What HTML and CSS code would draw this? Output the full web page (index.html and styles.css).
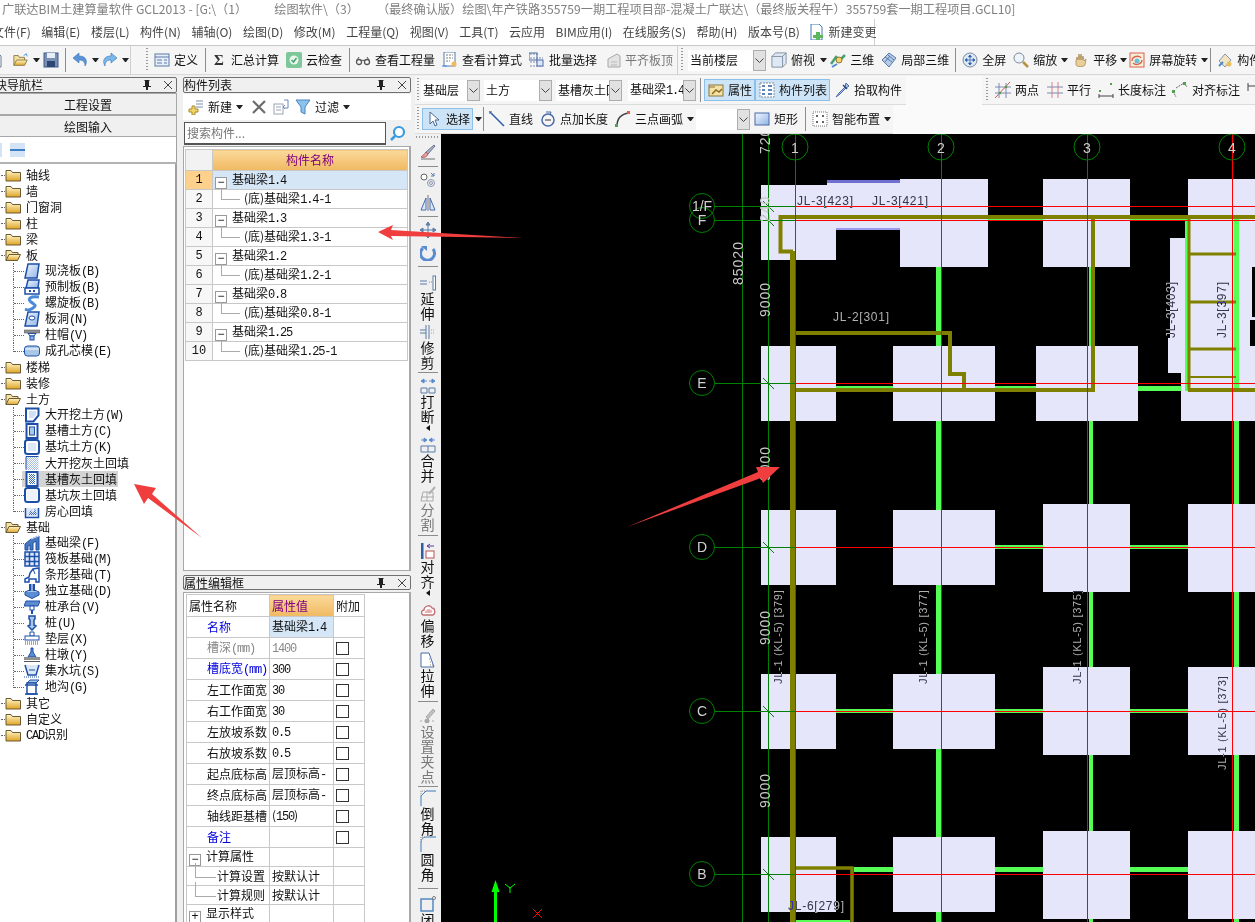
FILE: index.html
```html
<!DOCTYPE html>
<html lang="zh">
<head>
<meta charset="utf-8">
<title>广联达BIM土建算量软件 GCL2013</title>
<link rel="stylesheet" href="styles.css">
</head>
<body>
<svg class="defs" width="0" height="0">
<defs>
<linearGradient id="fg" x1="0" y1="0" x2="0" y2="1"><stop offset="0" stop-color="#fff6c4"/><stop offset="1" stop-color="#e0a42a"/></linearGradient>
<linearGradient id="bg" x1="0" y1="0" x2="1" y2="1"><stop offset="0" stop-color="#f2f7ff"/><stop offset="1" stop-color="#8fb4e6"/></linearGradient>
<pattern id="ht" width="2" height="2" patternUnits="userSpaceOnUse"><rect width="1" height="1" fill="#3b6cb8"/><rect x="1" y="1" width="1" height="1" fill="#3b6cb8"/></pattern>
<symbol id="fc" viewBox="0 0 16 16"><path d="M1 3.500h5l1.500 2H15.500v8.500H1z" fill="url(#fg)" stroke="#6b5a34"/></symbol>
<symbol id="fo" viewBox="0 0 16 16"><path d="M1 13.500V3.500h5l1.500 2h5.500v2.500" fill="#f4e2a4" stroke="#6b5a34"/><path d="M1 13.500l3-6h11.500l-3 6z" fill="url(#fg)" stroke="#6b5a34"/></symbol>
<symbol id="slab" viewBox="0 0 16 16"><path d="M4 1h11l-2 14H1z" fill="url(#bg)" stroke="#1c4fa8" stroke-width="1.500"/></symbol>
<symbol id="pre" viewBox="0 0 16 16"><path d="M4 1h11l-1 8H2z" fill="url(#bg)" stroke="#1c4fa8" stroke-width="1.500"/><rect x="1" y="9" width="14" height="6" fill="#fff" stroke="#1c4fa8" stroke-width="1.500"/><path d="M5 11h2v2H5zM9 11h2v2H9z" fill="#1c4fa8"/></symbol>
<symbol id="spi" viewBox="0 0 16 16"><path d="M15 2C6 1 3 4 7 7s6 3 2 6-6 2-8 1" fill="none" stroke="#4a8ad8" stroke-width="3"/></symbol>
<symbol id="hole" viewBox="0 0 16 16"><path d="M4 1h11l-2 14H1z" fill="url(#bg)" stroke="#1c4fa8" stroke-width="1.500"/><ellipse cx="8" cy="7" rx="3" ry="2" fill="#fff" stroke="#1c4fa8"/></symbol>
<symbol id="cap" viewBox="0 0 16 16"><rect x="0" y="3" width="16" height="3" fill="#909090" stroke="#555" stroke-width=".5"/><path d="M4 6.500h8L10 9H6z" fill="#fff" stroke="#1c4fa8"/><rect x="6" y="9" width="4" height="4" fill="#8fb4e6" stroke="#1c4fa8"/></symbol>
<symbol id="core" viewBox="0 0 16 16"><rect x=".5" y="3" width="15" height="10" rx="3" fill="#a9c8e8" stroke="#1c4fa8"/><path d="M1 6h14" stroke="#fff"/></symbol>
<symbol id="dig" viewBox="0 0 16 16"><path d="M2 1.500h12.500v7l-5 6H2z" fill="#fff" stroke="#1c4fa8" stroke-width="2"/><path d="M5 4h7v4l-3 3H5z" fill="#cfe0f8"/></symbol>
<symbol id="gro" viewBox="0 0 16 16"><rect x="2.500" y="1" width="11" height="14" fill="#fff" stroke="#1c4fa8" stroke-width="2"/><rect x="5.500" y="4" width="5" height="8" fill="#a9c8e8" stroke="#1c4fa8"/></symbol>
<symbol id="pit" viewBox="0 0 16 16"><rect x="1" y="1" width="14" height="14" rx="2.500" fill="#fff" stroke="#1c4fa8" stroke-width="2"/><rect x="4" y="4" width="8" height="8" fill="#dce8f8"/></symbol>
<symbol id="dig2" viewBox="0 0 16 16"><path d="M2 1h12.500v14H2z" fill="url(#ht)" opacity=".45"/><path d="M2 1.500v13M2 1.500h12.500" stroke="#1c4fa8"/></symbol>
<symbol id="gro2" viewBox="0 0 16 16"><rect x="2.500" y="1" width="11" height="14" fill="#fff" stroke="#1c4fa8" stroke-width="2"/><rect x="5" y="3" width="6" height="10" fill="url(#ht)"/></symbol>
<symbol id="pit2" viewBox="0 0 16 16"><rect x="1" y="1" width="14" height="14" rx="2.500" fill="#fff" stroke="#1c4fa8" stroke-width="2"/><rect x="3" y="3" width="10" height="10" fill="#eef3fb"/></symbol>
<symbol id="room" viewBox="0 0 16 16"><path d="M1.500 5v9.500h13V5" fill="#dce8f8" stroke="#1c4fa8" stroke-width="1.500"/><path d="M4 12l3-5 2 3 2-5 2 7z" fill="url(#ht)"/></symbol>
<symbol id="beam" viewBox="0 0 16 16"><path d="M1 15V9l6-5 8-3v14h-3V6L9 8v7H6v-5l-2 1v4z" fill="#4678c0" stroke="#1c4fa8"/><path d="M7 4l8-3" stroke="#cfe0f8"/></symbol>
<symbol id="raft" viewBox="0 0 16 16"><rect x="1" y="1" width="14" height="14" fill="#dce8f8" stroke="#1c4fa8" stroke-width="1.500"/><path d="M5.500 1v14M10.500 1v14M1 5.500h14M1 10.500h14" stroke="#1c4fa8" stroke-width="1.500"/></symbol>
<symbol id="strip" viewBox="0 0 16 16"><path d="M1 15V12l4-2 1-4 3-4 6-1v14H12v-3H5v3z" fill="#fff" stroke="#1c4fa8" stroke-width="1.500"/><path d="M9 2l2 5" stroke="#1c4fa8"/></symbol>
<symbol id="iso" viewBox="0 0 16 16"><path d="M1 9l7-3 7 3-7 4z" fill="#a9c8e8" stroke="#1c4fa8"/><path d="M1 9v3l7 3.500 7-3.500V9" fill="#5d8cd0" stroke="#1c4fa8"/><rect x="5" y="1" width="6" height="7" fill="#1c4fa8"/><path d="M8 1v7" stroke="#fff"/></symbol>
<symbol id="pc" viewBox="0 0 16 16"><path d="M2 2h14l-2 5H0z" fill="#5d8cd0" stroke="#1c4fa8"/><rect x="6" y="7" width="4" height="4" fill="#fff" stroke="#1c4fa8"/><path d="M8 11v4" stroke="#1c4fa8" stroke-width="2"/></symbol>
<symbol id="pile" viewBox="0 0 16 16"><path d="M5 1h6v3l-1 1v5l2 1-4 4-4-4 2-1V5L5 4z" fill="#a9c8e8" stroke="#1c4fa8" stroke-width="1.500"/></symbol>
<symbol id="cush" viewBox="0 0 16 16"><path d="M6 1h4v4H6z" fill="#fff" stroke="#1c4fa8"/><rect x="1" y="5" width="14" height="4" fill="#fff" stroke="#1c4fa8"/><path d="M1 11h14M1 13h14" stroke="#1c4fa8" stroke-dasharray="1 1"/></symbol>
<symbol id="pier" viewBox="0 0 16 16"><path d="M7 1h2v4l3 5H4l3-5z" fill="#5d8cd0" stroke="#1c4fa8"/><rect x="0" y="10" width="16" height="3" fill="#909090"/><path d="M0 14.500h16" stroke="#555"/></symbol>
<symbol id="sump" viewBox="0 0 16 16"><path d="M1 2l3 10h8l3-10" fill="#dce8f8" stroke="#1c4fa8" stroke-width="1.500"/><path d="M0 14h16" stroke="#1c4fa8" stroke-dasharray="1 1"/><path d="M5 7h6" stroke="#1c4fa8"/></symbol>
<symbol id="tren" viewBox="0 0 16 16"><path d="M3 4l3-3h9l-3 3z" fill="#a9c8e8" stroke="#1c4fa8"/><path d="M3 4h9v11H3z" fill="#fff" stroke="#1c4fa8" stroke-width="1.500"/><path d="M1 15h13M1 6h13" stroke="#1c4fa8" stroke-width="1.500"/></symbol>

<symbol id="file" viewBox="0 0 16 16"><path d="M2 1h9l3 3v11H2z" fill="#fff" stroke="#6a7a90"/></symbol>
<symbol id="open" viewBox="0 0 18 16"><path d="M1 14V3h5l1 2h6v3" fill="#f4e2a4" stroke="#8a7440"/><path d="M1 14l3-6h12l-3 6z" fill="url(#fg)" stroke="#8a7440"/><path d="M12 3l3-2 1 3" fill="none" stroke="#4a8ad8"/></symbol>
<symbol id="save" viewBox="0 0 16 16"><rect x="1" y="1" width="14" height="14" fill="#7a8fb4" stroke="#3e5a8c"/><rect x="4" y="1" width="8" height="5" fill="#e8eef8"/><rect x="4" y="9" width="8" height="6" fill="#2e4674"/></symbol>
<symbol id="undo" viewBox="0 0 16 16"><path d="M13 14c3-5 1-10-6-10V1L1 6l6 5V8c4 0 6 2 6 6z" fill="#5a94d8" stroke="#3a70b8" stroke-width=".6"/></symbol>
<symbol id="redo" viewBox="0 0 16 16"><path d="M3 14C0 9 2 4 9 4V1l6 5-6 5V8c-4 0-6 2-6 6z" fill="#7ab8e8" stroke="#3a70b8" stroke-width=".6"/></symbol>
<symbol id="def" viewBox="0 0 16 16"><rect x="1" y="2" width="14" height="12" fill="#e8eff8" stroke="#5a7aa8"/><path d="M1 5h14M3 8h5M3 11h5M10 8h3M10 11h3" stroke="#5a7aa8"/></symbol>
<symbol id="cloud" viewBox="0 0 16 16"><rect x="0" y="0" width="16" height="16" rx="2" fill="#7cc89a"/><circle cx="8" cy="8" r="4.500" fill="#e8f6ec"/><path d="M5.500 8l2 2 3-4" fill="none" stroke="#4aa070" stroke-width="1.500"/></symbol>
<symbol id="glass" viewBox="0 0 16 16"><circle cx="4" cy="10" r="2.500" fill="#fff" stroke="#555" stroke-width="1.300"/><circle cx="12" cy="10" r="2.500" fill="#fff" stroke="#555" stroke-width="1.300"/><path d="M6 9c1-1 3-1 4 0M2 8l2-3M14 8l-2-3" fill="none" stroke="#555"/></symbol>
<symbol id="calc" viewBox="0 0 16 16"><rect x="2" y="0" width="11" height="14" fill="#fff" stroke="#5a7aa8"/><path d="M4 3h7M4 6h7M4 9h4" stroke="#7c7c7c" stroke-dasharray="2 1"/><circle cx="12" cy="12" r="2.500" fill="#f0b860"/><path d="M0 14h5" stroke="#4a8ad8"/></symbol>
<symbol id="batch" viewBox="0 0 16 16"><path d="M1 2h9M1 6h13M1 10h9M1 14h13" stroke="#7c8aa8" stroke-dasharray="2 1"/><rect x="0" y="1" width="8" height="7" fill="none" stroke="#4a6aa8"/><rect x="8" y="8" width="6" height="6" fill="#dde8f8" stroke="#4a6aa8"/></symbol>
<symbol id="flat" viewBox="0 0 16 16"><path d="M3 15V7l9-5 3 2v11z" fill="#e4e4e4" stroke="#a8a8a8"/><path d="M6 10h6M6 13h6" stroke="#b8b8b8"/></symbol>
<symbol id="cube" viewBox="0 0 18 18"><path d="M1 5l4-4h12v12l-4 4H1z" fill="#dfe9f5" stroke="#7c8a9c"/><path d="M1 5h12v12M13 5l4-4" fill="none" stroke="#7c8a9c"/></symbol>
<symbol id="t3d" viewBox="0 0 16 16"><path d="M1 12l5-7 4 3 5-5" fill="none" stroke="#4aa070" stroke-width="2.500"/><circle cx="9" cy="8" r="3" fill="#f4d264" stroke="#8a7440"/><path d="M2 15l5-3" stroke="#4a8ad8" stroke-width="2"/></symbol>
<symbol id="part" viewBox="0 0 16 16"><path d="M1 8l7-7 7 5-7 9z" fill="#b6cbe6" stroke="#5a7aa8"/><path d="M4 5l7 5M7 3l6 5M4 10l5-6" stroke="#5a7aa8"/></symbol>
<symbol id="fit" viewBox="0 0 16 16"><circle cx="8" cy="8" r="7" fill="#dce8f4" stroke="#7c8a9c"/><path d="M8 3v10M3 8h10M8 3L6.500 5h3zM8 13l-1.500-2h3zM3 8l2-1.500v3zM13 8l-2-1.500v3z" fill="#2e5ca8" stroke="#2e5ca8" stroke-width=".7"/></symbol>
<symbol id="zoom" viewBox="0 0 16 16"><circle cx="6" cy="6" r="5" fill="#eef4fb" stroke="#7c8a9c"/><path d="M10 10l5 5" stroke="#b89040" stroke-width="2.500"/></symbol>
<symbol id="hand" viewBox="0 0 16 16"><path d="M3 9l1-4 1 3 1-6 1 6 1-6 1 6 1-4 1 5 2-2-1 6c-1 2-8 2-9 0z" fill="#eccf98" stroke="#a88c58" stroke-width=".8"/></symbol>
<symbol id="rot" viewBox="0 0 16 16"><rect x="1" y="1" width="14" height="14" fill="#f4f0d8" stroke="#e06050"/><path d="M3 9c0-5 7-6 9-3M13 8c0 4-6 6-9 3" fill="none" stroke="#e06050" stroke-width="1.300"/><circle cx="8" cy="9" r="2.500" fill="#6ac0d8"/></symbol>
<symbol id="comp" viewBox="0 0 16 16"><path d="M2 9l6-7 6 6-6 7z" fill="#f0e4c4" stroke="#8a94a4"/><path d="M2 14l4-4" stroke="#4a8ad8" stroke-width="2"/><circle cx="12" cy="12" r="2.500" fill="#e8c060"/></symbol>
<symbol id="prop" viewBox="0 0 16 16"><rect x="1" y="3" width="14" height="11" fill="#f4e2a4" stroke="#8a7440"/><path d="M4 12l4-4 3 2 3-3" fill="none" stroke="#8a6a20" stroke-width="1.500"/><path d="M1 5h6" stroke="#8a7440"/></symbol>
<symbol id="lst" viewBox="0 0 16 16"><rect x="1" y="1" width="14" height="14" fill="#fff" stroke="#7c8a9c" stroke-dasharray="2 1"/><path d="M3 4h3M3 8h3M3 12h3M9 4h4M9 8h4M9 12h4" stroke="#2e5ca8" stroke-width="1.500"/></symbol>
<symbol id="pick" viewBox="0 0 16 16"><path d="M12 1l3 3-3 2-6 6-4 3 3-4 6-6z" fill="#a8c4e8" stroke="#4a6aa8"/><path d="M9 3l4 4" stroke="#2e4674" stroke-width="1.500"/></symbol>
<symbol id="two" viewBox="0 0 16 16"><path d="M0 16L15 0" stroke="#e05050"/><path d="M4 1v15M11 1v15M0 5h16M0 11h16" stroke="#7c8ab0"/><circle cx="5" cy="11" r="1.300" fill="#50a050"/><circle cx="11" cy="5" r="1.300" fill="#50a050"/></symbol>
<symbol id="par" viewBox="0 0 16 16"><path d="M5 0v16M11 0v16" stroke="#e08080"/><path d="M0 5h16M0 11h16" stroke="#7c8ab0"/></symbol>
<symbol id="dim" viewBox="0 0 16 16"><path d="M1 12v4M15 12v4M1 14h14" stroke="#444"/><rect x="1" y="8" width="2" height="2" fill="#50a050"/><rect x="12" y="1" width="2" height="2" fill="#50a050"/></symbol>
<symbol id="adim" viewBox="0 0 16 16"><path d="M1 9l3 6M4 6l8-5 3 4" fill="none" stroke="#666" stroke-dasharray="2 1"/><rect x="0" y="8" width="3" height="3" fill="#50a050"/><rect x="11" y="0" width="3" height="3" fill="#50a050"/></symbol>
<symbol id="adim2" viewBox="0 0 16 16"><path d="M1 1v8M1 4h14" stroke="#444"/></symbol>
<symbol id="cur" viewBox="0 0 16 16"><path d="M4 1v12l3-3 2 5 2-1-2-5h4z" fill="#fff" stroke="#4c6a94"/></symbol>
<symbol id="line" viewBox="0 0 16 16"><path d="M1 1l14 14" stroke="#2e5ca8" stroke-width="1.500"/><path d="M0 3V0h3" fill="none" stroke="#555"/></symbol>
<symbol id="ptl" viewBox="0 0 16 16"><circle cx="8" cy="9" r="6" fill="none" stroke="#4a6aa8" stroke-width="1.500"/><path d="M5 9h6" stroke="#333"/><path d="M6 1h5l-1 3" fill="none" stroke="#4a6aa8"/></symbol>
<symbol id="arc" viewBox="0 0 16 16"><path d="M2 15C2 8 6 3 14 2" fill="none" stroke="#444" stroke-width="1.500"/><rect x="12" y="0" width="3" height="3" fill="#e06050"/><rect x="0" y="13" width="3" height="3" fill="#50a050"/></symbol>
<symbol id="rect" viewBox="0 0 16 16"><rect x="1" y="2" width="14" height="12" fill="url(#bg)" stroke="#4a6aa8"/></symbol>
<symbol id="smart" viewBox="0 0 16 16"><rect x="1" y="1" width="14" height="14" fill="#fff" stroke="#777" stroke-dasharray="1 1"/><path d="M5 4v2M4 5h2M11 4v2M10 5h2M5 10v2M4 11h2M11 10v2M10 11h2" stroke="#333"/></symbol>
<symbol id="newc" viewBox="0 0 16 16"><path d="M3 0h8l3 3v13H3z" fill="#fff" stroke="#3e7ab8"/><path d="M8 8h4v3h3v3h-3v2H8v-2H5v-3h3z" fill="#5cb85c"/></symbol>
<symbol id="newb" viewBox="0 0 16 16"><path d="M8 2h7M8 5h7M8 8h7" stroke="#7c8aa8"/><path d="M4 7h3v3h3v3H7v3H4v-3H1v-3h3z" fill="#f2d46a" stroke="#a88c30"/></symbol>
<symbol id="del" viewBox="0 0 16 16"><path d="M2 2l12 12M14 2L2 14" stroke="#6c6c6c" stroke-width="2.200"/></symbol>
<symbol id="cpy" viewBox="0 0 16 16"><rect x="1" y="5" width="9" height="10" fill="#fff" stroke="#9aa2b4"/><path d="M3 8h5M3 11h5" stroke="#9aa2b4"/><path d="M11 1h4v8h-4M12 6l-2 2 2 2" fill="none" stroke="#6a8ac0"/></symbol>
<symbol id="filt" viewBox="0 0 16 16"><path d="M1 1h14L10 8v7l-4-2V8z" fill="#8ac4ec" stroke="#4a86c0"/></symbol>
<symbol id="mag" viewBox="0 0 16 16"><circle cx="9" cy="7" r="5" fill="#fff" stroke="#3a9ae0" stroke-width="2.200"/><path d="M5 11l-4 4" stroke="#3a9ae0" stroke-width="2.500"/></symbol>
<symbol id="brush" viewBox="0 0 16 16"><path d="M14 1l1 1-7 8-2-2z" fill="#a8b0c8" stroke="#707890"/><path d="M6 8l2 2c-1 3-4 4-7 3 2-1 3-3 5-5z" fill="#e8a0a0" stroke="#a86060"/><path d="M1 15h14" stroke="#707070"/></symbol>
<symbol id="ofs" viewBox="0 0 16 16"><circle cx="4" cy="5" r="3" fill="#fff" stroke="#666"/><circle cx="11" cy="11" r="3.500" fill="none" stroke="#8a96b0"/><circle cx="11" cy="11" r="1.500" fill="none" stroke="#8a96b0"/><path d="M11 1l3 3M14 1v3h-3" fill="none" stroke="#5a7aa8"/></symbol>
<symbol id="mir" viewBox="0 0 16 16"><path d="M8 0v16" stroke="#777"/><path d="M6 3L1 15h5zM10 3l5 12h-5z" fill="#dde8f8" stroke="#4a6aa8"/></symbol>
<symbol id="mov" viewBox="0 0 16 16"><path d="M8 0v16M0 8h16M8 0L6 3h4zM8 16l-2-3h4zM0 8l3-2v4zM16 8l-3-2v4z" fill="#7090b8" stroke="#5a7aa8"/></symbol>
<symbol id="rota" viewBox="0 0 16 16"><path d="M3 3a7 7 0 1 0 10 1" fill="none" stroke="#5a8ad0" stroke-width="3"/><path d="M1 1h6v5z" fill="#5a8ad0"/></symbol>
<symbol id="ext" viewBox="0 0 16 16"><path d="M0 6h7M0 9h7" stroke="#5a7aa8"/><path d="M9 7h3" stroke="#888" stroke-dasharray="1 1"/><rect x="13" y="1" width="2.500" height="14" fill="#fff" stroke="#5a7aa8"/></symbol>
<symbol id="trim" viewBox="0 0 16 16"><path d="M0 6h6M0 9h6" stroke="#5a7aa8"/><path d="M6 1v14M9 1v14" stroke="#5a7aa8"/><path d="M11 6h4M11 9h4" stroke="#a0a0b0" stroke-dasharray="1 1"/></symbol>
<symbol id="brk" viewBox="0 0 16 16"><path d="M1 3l3-2v4zM15 3l-3-2v4zM4 3h3M9 3h3" fill="#5a8ad0" stroke="#5a8ad0"/><path d="M1 10h6v5H1zM9 10h6v5H9z" fill="none" stroke="#5a7aa8"/></symbol>
<symbol id="mrg" viewBox="0 0 16 16"><path d="M7 3L4 1v4zM9 3l3-2v4zM1 3h3M12 3h3" fill="#5a8ad0" stroke="#5a8ad0"/><path d="M1 9h14v6H1zM8 9v6" fill="none" stroke="#5a7aa8"/></symbol>
<symbol id="spl" viewBox="0 0 16 16"><path d="M1 15h12V6H3z" fill="#f2f2f2" stroke="#aaa"/><path d="M1 11h13M7 6v9" stroke="#aaa"/><path d="M15 1l-6 7" stroke="#b0b0b0" stroke-width="2"/></symbol>
<symbol id="aln" viewBox="0 0 16 16"><rect x="1" y="0" width="2.500" height="16" fill="#2e5ca8"/><path d="M14 3H7M7 3l3-2M7 3l3 2" fill="none" stroke="#5a3aa8"/><rect x="6" y="8" width="8" height="7" fill="#fff" stroke="#b85050"/></symbol>
<symbol id="ofc" viewBox="0 0 16 16"><path d="M3 13C0 11 2 8 4 8 4 4 10 2 12 6c3 0 4 5 1 7z" fill="#fff" stroke="#c07070" stroke-width="1.300"/><path d="M5 11c-1-1 0-2 1-2 0-2 4-3 5-1 1 0 2 2 0 3z" fill="#e8b0b0"/></symbol>
<symbol id="strc" viewBox="0 0 16 16"><path d="M1 1h8l5 14H1z" fill="#fff" stroke="#4a6aa8"/><path d="M9 7h2M10 10h2M10 13h3" stroke="#888" stroke-dasharray="1 1"/></symbol>
<symbol id="grip" viewBox="0 0 16 16"><path d="M6 9l7-8 2 2-7 8z" fill="#c0c0c0" stroke="#a8a8a8"/><path d="M0 13h16" stroke="#aaa" stroke-dasharray="2 2"/><rect x="5" y="11" width="4" height="4" fill="#aaa"/></symbol>
<symbol id="cham" viewBox="0 0 16 16"><path d="M1 16V6l5-5h10" fill="none" stroke="#3e7ab8"/><path d="M1 6V1h5" fill="none" stroke="#888" stroke-dasharray="1 1"/></symbol>
<symbol id="fil" viewBox="0 0 16 16"><path d="M1 16V7c0-4 2-6 6-6h9" fill="none" stroke="#3e7ab8"/><path d="M1 6V1h5" fill="none" stroke="#888" stroke-dasharray="1 1"/></symbol>
<symbol id="cls" viewBox="0 0 16 16"><rect x="1" y="3" width="12" height="12" fill="none" stroke="#3e7ab8" stroke-width="1.300"/><circle cx="14" cy="2" r="1.500" fill="#fff" stroke="#777"/></symbol>
<symbol id="pin" viewBox="0 0 12 12"><path d="M3.500 1h5v1H8v5h2v1H7v3H5V8H2V7h2V2h-.500z" fill="#222"/></symbol>
<symbol id="x" viewBox="0 0 12 12"><path d="M2 2l8 8M10 2l-8 8" stroke="#444"/></symbol>
<symbol id="chev" viewBox="0 0 9 5"><path d="M.5.500l4 4 4-4" fill="none" stroke="#444"/></symbol>
</defs>
</svg>

<div class="app">
  <div class="title"><span class="tt1">广联达BIM土建算量软件 GCL2013 - [G:\（1）</span><span class="tt2">绘图软件\（3）</span><span class="tt3">（最终确认版）绘图\年产铁路355759一期工程项目部-混凝土广联达\（最终版关程午）355759套一期工程项目.GCL10]</span></div>

  <div class="menu">
    <div class="menu-in">
      <span class="mi first">文件(F)</span><span class="mi">编辑(E)</span><span class="mi">楼层(L)</span><span class="mi">构件(N)</span><span class="mi">辅轴(O)</span><span class="mi">绘图(D)</span><span class="mi">修改(M)</span><span class="mi">工程量(Q)</span><span class="mi">视图(V)</span><span class="mi">工具(T)</span><span class="mi">云应用</span><span class="mi">BIM应用(I)</span><span class="mi">在线服务(S)</span><span class="mi">帮助(H)</span><span class="mi">版本号(B)</span>
      <span class="mi newch"><svg class="ic"><use href="#newc"/></svg>新建变更</span>
    </div>
  </div>

  <div class="tb row2">
    <svg class="ic nm13"><use href="#file"/></svg>
    <svg class="ic m10"><use href="#open"/></svg><i class="arr m4"></i>
    <svg class="ic m3"><use href="#save"/></svg><b class="sep m6"></b>
    <svg class="ic m6"><use href="#undo"/></svg><i class="arr m4"></i>
    <svg class="ic m3"><use href="#redo"/></svg><i class="arr m4"></i><b class="sep lite m1"></b>
    <b class="grip m15"></b>
    <span class="it m6"><svg class="ic"><use href="#def"/></svg>定义</span><b class="sep m7"></b>
    <span class="it m5"><b class="sigma">Σ</b>汇总计算</span>
    <span class="it m7"><svg class="ic"><use href="#cloud"/></svg>云检查</span><b class="sep m7"></b>
    <span class="it m5"><svg class="ic"><use href="#glass"/></svg>查看工程量</span>
    <span class="it m7"><svg class="ic"><use href="#calc"/></svg>查看计算式</span>
    <span class="it m7"><svg class="ic"><use href="#batch"/></svg>批量选择</span>
    <span class="it m8 dis"><svg class="ic"><use href="#flat"/></svg>平齐板顶</span><b class="sep lite m4"></b>
    <b class="grip m3"></b>
    <span class="combo w78 m5"><span class="cv">当前楼层</span><span class="cb"><svg class="chev"><use href="#chev"/></svg></span></span>
    <span class="it m5"><svg class="ic"><use href="#cube"/></svg>俯视</span><i class="arr m5"></i>
    <span class="it m3"><svg class="ic"><use href="#t3d"/></svg>三维</span>
    <span class="it m7"><svg class="ic"><use href="#part"/></svg>局部三维</span><b class="sep m6"></b>
    <span class="it m6"><svg class="ic"><use href="#fit"/></svg>全屏</span>
    <span class="it m7"><svg class="ic"><use href="#zoom"/></svg>缩放</span><i class="arr m4"></i>
    <span class="it m5"><svg class="ic"><use href="#hand"/></svg>平移</span><i class="arr m3"></i>
    <span class="it m2"><svg class="ic"><use href="#rot"/></svg>屏幕旋转</span><i class="arr m4"></i><b class="sep m2"></b>
    <span class="it m6"><svg class="ic"><use href="#comp"/></svg>构件</span>
  </div>

  <div class="main">
    <aside class="nav">
      <div class="phead clipl"><span class="ptitle">模块导航栏</span><svg class="pi"><use href="#pin"/></svg><svg class="pi"><use href="#x"/></svg></div>
      <div class="navbtn">工程设置</div>
      <div class="navbtn">绘图输入</div>
      <div class="navtools"><span class="tplus"></span><span class="tminus"></span></div>
      <div class="tree">
        <div class="tn"><svg class="ic"><use href="#fc"/></svg><span>轴线</span></div>
        <div class="tn"><svg class="ic"><use href="#fc"/></svg><span>墙</span></div>
        <div class="tn"><svg class="ic"><use href="#fc"/></svg><span>门窗洞</span></div>
        <div class="tn"><svg class="ic"><use href="#fc"/></svg><span>柱</span></div>
        <div class="tn"><svg class="ic"><use href="#fc"/></svg><span>梁</span></div>
        <div class="tn"><svg class="ic"><use href="#fo"/></svg><span>板</span></div>
        <div class="tc"><svg class="ic"><use href="#slab"/></svg><span>现浇板<em>(B)</em></span></div>
        <div class="tc"><svg class="ic"><use href="#pre"/></svg><span>预制板<em>(B)</em></span></div>
        <div class="tc"><svg class="ic"><use href="#spi"/></svg><span>螺旋板<em>(B)</em></span></div>
        <div class="tc"><svg class="ic"><use href="#hole"/></svg><span>板洞<em>(N)</em></span></div>
        <div class="tc"><svg class="ic"><use href="#cap"/></svg><span>柱帽<em>(V)</em></span></div>
        <div class="tc last"><svg class="ic"><use href="#core"/></svg><span>成孔芯模<em>(E)</em></span></div>
        <div class="tn"><svg class="ic"><use href="#fc"/></svg><span>楼梯</span></div>
        <div class="tn"><svg class="ic"><use href="#fc"/></svg><span>装修</span></div>
        <div class="tn"><svg class="ic"><use href="#fo"/></svg><span>土方</span></div>
        <div class="tc"><svg class="ic"><use href="#dig"/></svg><span>大开挖土方<em>(W)</em></span></div>
        <div class="tc"><svg class="ic"><use href="#gro"/></svg><span>基槽土方<em>(C)</em></span></div>
        <div class="tc"><svg class="ic"><use href="#pit"/></svg><span>基坑土方<em>(K)</em></span></div>
        <div class="tc"><svg class="ic"><use href="#dig2"/></svg><span>大开挖灰土回填</span></div>
        <div class="tc sel"><span class="selbox"><svg class="ic"><use href="#gro2"/></svg><span>基槽灰土回填</span></span></div>
        <div class="tc"><svg class="ic"><use href="#pit2"/></svg><span>基坑灰土回填</span></div>
        <div class="tc last"><svg class="ic"><use href="#room"/></svg><span>房心回填</span></div>
        <div class="tn"><svg class="ic"><use href="#fo"/></svg><span>基础</span></div>
        <div class="tc"><svg class="ic"><use href="#beam"/></svg><span>基础梁<em>(F)</em></span></div>
        <div class="tc"><svg class="ic"><use href="#raft"/></svg><span>筏板基础<em>(M)</em></span></div>
        <div class="tc"><svg class="ic"><use href="#strip"/></svg><span>条形基础<em>(T)</em></span></div>
        <div class="tc"><svg class="ic"><use href="#iso"/></svg><span>独立基础<em>(D)</em></span></div>
        <div class="tc"><svg class="ic"><use href="#pc"/></svg><span>桩承台<em>(V)</em></span></div>
        <div class="tc"><svg class="ic"><use href="#pile"/></svg><span>桩<em>(U)</em></span></div>
        <div class="tc"><svg class="ic"><use href="#cush"/></svg><span>垫层<em>(X)</em></span></div>
        <div class="tc"><svg class="ic"><use href="#pier"/></svg><span>柱墩<em>(Y)</em></span></div>
        <div class="tc"><svg class="ic"><use href="#sump"/></svg><span>集水坑<em>(S)</em></span></div>
        <div class="tc last"><svg class="ic"><use href="#tren"/></svg><span>地沟<em>(G)</em></span></div>
        <div class="tn"><svg class="ic"><use href="#fc"/></svg><span>其它</span></div>
        <div class="tn"><svg class="ic"><use href="#fc"/></svg><span>自定义</span></div>
        <div class="tn"><svg class="ic"><use href="#fc"/></svg><span><em>CAD</em>识别</span></div>
      </div>
    </aside>

    <section class="mid">
      <div class="listpanel">
        <div class="phead"><span class="ptitle">构件列表</span><svg class="pi"><use href="#pin"/></svg><svg class="pi"><use href="#x"/></svg></div>
        <div class="listtools">
          <span class="it"><svg class="ic"><use href="#newb"/></svg>新建</span><i class="arr m4"></i>
          <svg class="ic m8"><use href="#del"/></svg>
          <svg class="ic m6"><use href="#cpy"/></svg>
          <svg class="ic m6"><use href="#filt"/></svg>
          <span class="it m4">过滤</span><i class="arr m4"></i>
        </div>
        <div class="search"><div class="sbox">搜索构件...</div><svg class="ic m4"><use href="#mag"/></svg></div>
        <div class="gridwrap">
          <table class="lg">
            <colgroup><col class="c0"><col></colgroup>
            <tr><th class="hn"></th><th class="oh">构件名称</th></tr>
            <tr class="cur"><td class="n">1</td><td class="pr"><span class="bx">−</span>基础梁<em>1.4</em></td></tr>
            <tr><td class="n">2</td><td class="ch">(底)基础梁<em>1.4-1</em></td></tr>
            <tr><td class="n">3</td><td class="pr"><span class="bx">−</span>基础梁<em>1.3</em></td></tr>
            <tr><td class="n">4</td><td class="ch">(底)基础梁<em>1.3-1</em></td></tr>
            <tr><td class="n">5</td><td class="pr"><span class="bx">−</span>基础梁<em>1.2</em></td></tr>
            <tr><td class="n">6</td><td class="ch">(底)基础梁<em>1.2-1</em></td></tr>
            <tr><td class="n">7</td><td class="pr"><span class="bx">−</span>基础梁<em>0.8</em></td></tr>
            <tr><td class="n">8</td><td class="ch">(底)基础梁<em>0.8-1</em></td></tr>
            <tr><td class="n">9</td><td class="pr"><span class="bx">−</span>基础梁<em>1.25</em></td></tr>
            <tr><td class="n">10</td><td class="ch">(底)基础梁<em>1.25-1</em></td></tr>
          </table>
        </div>
      </div>
      <div class="proppanel">
        <div class="phead"><span class="ptitle">属性编辑框</span><svg class="pi"><use href="#pin"/></svg><svg class="pi"><use href="#x"/></svg></div>
        <div class="propwrap">
          <table class="pg">
            <colgroup><col class="p0"><col class="p1"><col class="p2"></colgroup>
            <tr class="ph"><th class="nh">属性名称</th><th class="oh">属性值</th><th>附加</th></tr>
            <tr class="curp"><td class="blue">名称</td><td class="val">基础梁<em>1.4</em></td><td></td></tr>
            <tr><td class="grey">槽深<em>(mm)</em></td><td class="grey tv"><em>1400</em></td><td><i class="cbx"></i></td></tr>
            <tr><td class="blue">槽底宽<em>(mm)</em></td><td class="tv"><em>300</em></td><td><i class="cbx"></i></td></tr>
            <tr><td>左工作面宽</td><td class="tv"><em>30</em></td><td><i class="cbx"></i></td></tr>
            <tr><td>右工作面宽</td><td class="tv"><em>30</em></td><td><i class="cbx"></i></td></tr>
            <tr><td>左放坡系数</td><td class="tv"><em>0.5</em></td><td><i class="cbx"></i></td></tr>
            <tr><td>右放坡系数</td><td class="tv"><em>0.5</em></td><td><i class="cbx"></i></td></tr>
            <tr><td>起点底标高</td><td class="tv">层顶标高<em>-</em></td><td><i class="cbx"></i></td></tr>
            <tr><td>终点底标高</td><td class="tv">层顶标高<em>-</em></td><td><i class="cbx"></i></td></tr>
            <tr><td>轴线距基槽</td><td class="tv">(<em>150</em>)</td><td><i class="cbx"></i></td></tr>
            <tr><td class="blue">备注</td><td></td><td><i class="cbx"></i></td></tr>
            <tr class="sh"><td class="grp"><span class="bx">−</span>计算属性</td><td></td><td></td></tr>
            <tr class="sh"><td class="sub">计算设置</td><td class="tv">按默认计</td><td></td></tr>
            <tr class="sh"><td class="sub">计算规则</td><td class="tv">按默认计</td><td></td></tr>
            <tr class="sh"><td class="grp"><span class="bx">+</span>显示样式</td><td></td><td></td></tr>
          </table>
        </div>
      </div>
    </section>

    <section class="work">
      <div class="rowtop">
        <div class="tb row3 p1">
          <b class="grip m2"></b>
          <span class="combo w59 m2"><span class="cv">基础层</span><span class="cb"><svg class="chev"><use href="#chev"/></svg></span></span>
          <span class="combo w68 m4"><span class="cv">土方</span><span class="cb"><svg class="chev"><use href="#chev"/></svg></span></span>
          <span class="combo w66 m4"><span class="cv">基槽灰土回填</span><span class="cb"><svg class="chev"><use href="#chev"/></svg></span></span>
          <span class="combo w68 m6"><span class="cv">基础梁<em>1.4</em></span><span class="cb"><svg class="chev"><use href="#chev"/></svg></span></span>
          <b class="sep m4"></b>
          <span class="it tog w51 m3"><svg class="ic"><use href="#prop"/></svg>属性</span>
          <span class="it tog w75"><svg class="ic"><use href="#lst"/></svg>构件列表</span>
          <span class="it m4"><svg class="ic"><use href="#pick"/></svg>拾取构件</span>
        </div>
        <div class="tb row3 p2">
          <b class="grip m4"></b>
          <span class="it m7"><svg class="ic"><use href="#two"/></svg>两点</span>
          <span class="it m8"><svg class="ic"><use href="#par"/></svg>平行</span>
          <span class="it m7"><svg class="ic"><use href="#dim"/></svg>长度标注</span>
          <span class="it m6"><svg class="ic"><use href="#adim"/></svg>对齐标注</span>
          <svg class="ic m7"><use href="#adim2"/></svg>
        </div>
      </div>
      <div class="rowtop">
        <div class="tb row4">
          <b class="grip m2"></b>
          <span class="it tog w51 m3"><svg class="ic"><use href="#cur"/></svg>选择</span><i class="arr m2"></i><b class="sep m1"></b>
          <span class="it m5"><svg class="ic"><use href="#line"/></svg>直线</span>
          <span class="it m7"><svg class="ic"><use href="#ptl"/></svg>点加长度</span>
          <span class="it m7"><svg class="ic"><use href="#arc"/></svg>三点画弧</span><i class="arr m4"></i>
          <span class="combo w54 m2"><span class="cv"></span><span class="cb"><svg class="chev"><use href="#chev"/></svg></span></span>
          <span class="it m4"><svg class="ic"><use href="#rect"/></svg>矩形</span><b class="sep m7"></b>
          <span class="it m6"><svg class="ic"><use href="#smart"/></svg>智能布置</span><i class="arr m4"></i>
        </div>
      </div>
      <div class="stage">
        <div class="vtools">
          <b class="vgrip"></b>
          <svg class="ic t6"><use href="#brush"/></svg><b class="vsep t6"></b>
          <svg class="ic t5"><use href="#ofs"/></svg>
          <svg class="ic t7"><use href="#mir"/></svg><b class="vsep t5"></b>
          <svg class="ic t5"><use href="#mov"/></svg>
          <svg class="ic t7"><use href="#rota"/></svg><b class="vsep t5"></b>
          <span class="vi t8"><svg class="ic"><use href="#ext"/></svg><span class="vt">延伸</span></span>
          <span class="vi t2"><svg class="ic"><use href="#trim"/></svg><span class="vt">修剪</span></span><b class="vsep t1"></b>
          <span class="vi t5"><svg class="ic"><use href="#brk"/></svg><span class="vt">打断</span></span><i class="varr"></i>
          <span class="vi t6"><svg class="ic"><use href="#mrg"/></svg><span class="vt">合并</span></span>
          <span class="vi t2 dis"><svg class="ic"><use href="#spl"/></svg><span class="vt">分割</span></span><b class="vsep t2"></b>
          <span class="vi t7"><svg class="ic"><use href="#aln"/></svg><span class="vt">对齐</span></span><i class="varr"></i>
          <span class="vi t6"><svg class="ic"><use href="#ofc"/></svg><span class="vt">偏移</span></span>
          <span class="vi t3"><svg class="ic"><use href="#strc"/></svg><span class="vt">拉伸</span></span><b class="vsep t2"></b>
          <span class="vi t6 dis"><svg class="ic"><use href="#grip"/></svg><span class="vt">设置夹点</span></span><b class="vsep t1"></b>
          <span class="vi t3"><svg class="ic"><use href="#cham"/></svg><span class="vt">倒角</span></span>
          <span class="vi tm1"><svg class="ic"><use href="#fil"/></svg><span class="vt">圆角</span></span><b class="vsep t5"></b>
          <span class="vi t7"><svg class="ic"><use href="#cls"/></svg><span class="vt">闭合</span></span>
        </div>
        <svg class="canvas" viewBox="441 134 814 788" width="814" height="788">
          <rect x="441" y="134" width="814" height="788" fill="#000"/>
          <g class="block">
            <path d="M761 185h66v-3h73v-3h88v88h-88v-38h-64v31h-75z"/>
            <rect x="1043" y="179" width="87" height="88"/>
            <rect x="1188" y="179" width="67" height="88"/>
            <path d="M1170 238h85v183h-74v-48h-13v-35h2z"/>
            <rect x="761" y="346" width="75" height="75"/><rect x="893" y="346" width="102" height="75"/><rect x="1036" y="346" width="102" height="75"/>
            <rect x="761" y="510" width="75" height="75"/><rect x="893" y="510" width="102" height="75"/><rect x="1043" y="504" width="87" height="88"/><rect x="1188" y="504" width="67" height="88"/>
            <rect x="761" y="674" width="75" height="75"/><rect x="893" y="674" width="102" height="75"/><rect x="1043" y="667" width="87" height="88"/><rect x="1188" y="667" width="67" height="88"/>
            <rect x="761" y="837" width="75" height="75"/><rect x="893" y="837" width="102" height="75"/><rect x="1043" y="831" width="87" height="88"/><rect x="1188" y="831" width="67" height="88"/>
          </g>
          <rect x="1252" y="267" width="3" height="50" fill="#000"/><rect x="1250" y="320" width="5" height="26" fill="#000"/>
          <rect x="827" y="180" width="73" height="3" fill="#7070d0"/><rect x="836" y="228" width="64" height="2" fill="#9a9af0"/>
          <g class="gbeam">
            <rect x="936" y="267" width="5" height="79"/><rect x="936" y="421" width="5" height="89"/><rect x="936" y="585" width="5" height="89"/><rect x="936" y="749" width="5" height="88"/><rect x="936" y="912" width="5" height="10"/>
            <rect x="1089" y="267" width="4" height="79"/><rect x="1089" y="421" width="4" height="83"/><rect x="1089" y="592" width="4" height="75"/><rect x="1089" y="755" width="4" height="76"/><rect x="1089" y="919" width="4" height="3"/>
            <rect x="1234" y="217" width="5" height="174"/><rect x="1234" y="421" width="5" height="83"/><rect x="1234" y="592" width="5" height="75"/><rect x="1234" y="755" width="5" height="76"/><rect x="1234" y="919" width="5" height="3"/>
            <rect x="1185" y="217" width="5" height="174"/>
            <rect x="988" y="218" width="55" height="3"/><rect x="1130" y="218" width="58" height="3"/>
            <rect x="836" y="386" width="57" height="2"/><rect x="995" y="386" width="41" height="2"/><rect x="1138" y="386" width="43" height="5"/>
            <rect x="995" y="545" width="48" height="4"/><rect x="1130" y="545" width="58" height="4"/>
            <rect x="836" y="709" width="57" height="4"/><rect x="995" y="709" width="48" height="4"/><rect x="1130" y="709" width="58" height="4"/>
            <rect x="854" y="867" width="39" height="5"/><rect x="995" y="867" width="48" height="5"/><rect x="1130" y="867" width="58" height="5"/>
            <rect x="796" y="920" width="54" height="2"/>
          </g>
          <g class="olive">
            <path d="M1255 217H780.500V251.500H793"/>
            <path d="M792.500 251V922" stroke-width="5"/>
            <path d="M1093 217V390H793"/>
            <path d="M793 333H950V374H964V390"/>
            <path d="M1188 390H1255"/>
            <path d="M1189 217V390M1189 254H1236M1189 302H1236M1189 349H1236" stroke-width="3"/>
            <path d="M1189 377H1236" stroke-width="2"/>
            <path d="M793 868H852V922" stroke-width="3.500"/>
          </g>
          <g class="red">
            <path d="M795.500 134V922M941.500 134V922M1087.500 134V922M1232.500 134V922"/>
            <path d="M795 206.500H1255M795 220.500H1255M795 383.500H1255M795 547.500H1255M795 711.500H1255M795 874.500H1255"/>
          </g>
          <g class="axis">
            <path d="M742.500 134V922M768.500 134V922"/>
            <path d="M714 206.500H795M714 220.500H795M714 383.500H795M714 547.500H795M714 711.500H795M714 874.500H795"/>
            <path d="M763 201l11 11M763 215l11 11M763 378l11 11M763 542l11 11M763 706l11 11M763 869l11 11"/>
            <circle cx="702" cy="206" r="12.500"/><circle cx="702" cy="220" r="12.500"/><circle cx="702" cy="383" r="12.500"/><circle cx="702" cy="547" r="12.500"/><circle cx="702" cy="711" r="12.500"/><circle cx="702" cy="874" r="12.500"/>
            <circle cx="795" cy="147" r="13"/><circle cx="941" cy="147" r="13"/><circle cx="1087" cy="147" r="13"/><circle cx="1232" cy="147" r="13"/>
          </g>
          <g class="blab">
            <text x="795" y="153">1</text><text x="941" y="153">2</text><text x="1087" y="153">3</text><text x="1232" y="153">4</text>
            <text x="702" y="211">1/F</text><text x="702" y="225">F</text><text x="702" y="388">E</text><text x="702" y="552">D</text><text x="702" y="716">C</text><text x="702" y="879">B</text>
          </g>
          <g class="dimt">
            <text transform="translate(770 154) rotate(-90)">7200</text>
            <text transform="translate(770 222) rotate(-90)">240</text>
            <text transform="translate(743 285) rotate(-90)">85020</text>
            <text transform="translate(770 317) rotate(-90)">9000</text>
            <text transform="translate(770 481) rotate(-90)">9000</text>
            <text transform="translate(770 645) rotate(-90)">9000</text>
            <text transform="translate(770 808) rotate(-90)">9000</text>
          </g>
          <g class="jl">
            <text class="d" x="797" y="205">JL-3[423]</text><text class="d" x="872" y="205">JL-3[421]</text>
            <text class="d" x="833" y="321">JL-2[301]</text>
            <text class="d" transform="translate(1175 338) rotate(-90)">JL-3[403]</text>
            <text class="d" transform="translate(1226 338) rotate(-90)">JL-3[397]</text>
            <text transform="translate(782 684) rotate(-90)">JL-1 (KL-5) [379]</text>
            <text transform="translate(927 684) rotate(-90)">JL-1 (KL-5) [377]</text>
            <text transform="translate(1081 684) rotate(-90)">JL-1 (KL-5) [375]</text>
            <text transform="translate(1226 770) rotate(-90)">JL-1 (KL-5) [373]</text>
            <text class="d" x="788" y="910">JL-6[279]</text>
          </g>
          <g class="ucs">
            <rect x="494" y="890" width="3" height="32" fill="#00ff00"/><path d="M495.500 880l4 12h-8z" fill="#00ff00"/>
            <path d="M505 884l5 4 5-4M510 888v5" fill="none" stroke="#00ff00"/>
            <path d="M533 909l9 9M542 909l-9 9" fill="none" stroke="#ff0000"/>
          </g>
        </svg>
      </div>
    </section>
  </div>

  <svg class="anno" viewBox="0 0 1255 922" width="1255" height="922">
    <polygon points="378,232 393,225 391,230 523,238 391,236 393,240"/>
    <polygon points="134,484 156,488 152,494 202,538 148,498 144,504"/>
    <polygon points="780,467 756,467 758,472 627,527 761,478 763,483"/>
  </svg>
</div>
</body>
</html>
```
FILE: styles.css
```css
* { box-sizing: border-box; }
html, body { margin: 0; padding: 0; }
body { font-family: "Noto Sans CJK SC", "Noto Sans", sans-serif; font-size: 12px; line-height: 16px; color: #111; background: #f0f0f0; }
.defs { position: absolute; }
.app { position: relative; width: 1255px; height: 922px; overflow: hidden; background: #f0f0f0; }
em { font-family: "Liberation Mono", monospace; font-style: normal; letter-spacing: -1.2px; }
svg { display: block; flex: none; }
.ic { width: 16px; height: 16px; flex: none; }

.title { height: 19px; background: #fff; color: #808080; font-size: 12.2px; line-height: 18px; white-space: nowrap; padding-left: 2px; display: flex; }
.tt2 { margin-left: 27px; }
.tt3 { margin-left: 18px; }

.menu { height: 27px; background: #fff; border-bottom: 1px solid #c8c8c8; overflow: hidden; }
.menu-in { display: inline-flex; align-items: center; height: 26px; width: 883px; border-right: 1px solid #d0d0d0; gap: 10.5px; color: #444; white-space: nowrap; margin-left: -8px; }
.mi { display: flex; align-items: center; gap: 4px; }
.newch { margin-left: -2px; }

.tb { display: flex; align-items: center; background: #f5f5f5; white-space: nowrap; }
.row2 { height: 29px; border-bottom: 1px solid #d8d8d8; }
.it { display: inline-flex; align-items: center; gap: 4px; height: 22px; }
.dis { color: #777; }
.sep { display: block; flex: none; width: 1px; height: 24px; background: #8c8c8c; }
.sep.lite { background: #cfcfcf; height: 29px; }
.grip { display: block; flex: none; width: 2px; height: 24px; background-image: linear-gradient(#999 50%, transparent 50%); background-size: 2px 3px; }
.arr { display: block; flex: none; width: 7px; height: 4px; border-left: 3.500px solid transparent; border-right: 3.500px solid transparent; border-top: 4px solid #222; }
.sigma { width: 16px; text-align: center; font-size: 15px; font-weight: 700; font-family: "Liberation Serif", serif; color: #333; }

.combo { display: flex; flex: none; align-items: center; height: 21px; background: #fff; }
.cv { flex: 1; min-width: 0; padding-left: 2px; overflow: hidden; white-space: nowrap; }
.cb { flex: none; width: 13px; height: 21px; background: #e1e1e1; border: 1px solid #adadad; display: flex; align-items: center; justify-content: center; }
.chev { width: 9px; height: 5px; }
.w78 { width: 78px; } .w59 { width: 59px; } .w68 { width: 68px; } .w66 { width: 66px; } .w54 { width: 54px; }
.w51 { width: 51px; } .w75 { width: 75px; }
.tog { background: #cde4f7; border: 1px solid #8ac0ea; padding-left: 3px; }

.m1 { margin-left: 1px; } .m2 { margin-left: 2px; } .m3 { margin-left: 3px; } .m4 { margin-left: 4px; } .m5 { margin-left: 5px; } .m6 { margin-left: 6px; } .m7 { margin-left: 7px; } .m8 { margin-left: 8px; } .m10 { margin-left: 10px; } .m15 { margin-left: 15px; }
.nm13 { margin-left: -13px; }
.t1 { margin-top: 1px; } .t2 { margin-top: 2px; } .t3 { margin-top: 3px; } .t5 { margin-top: 5px; } .t6 { margin-top: 6px; } .t7 { margin-top: 7px; } .t8 { margin-top: 8px; } .tm1 { margin-top: -1px; }

.main { display: flex; height: 847px; padding-top: 2px; }

.phead { display: flex; flex: none; align-items: center; height: 16px; background: #f0f0f0; border: 1px solid #707070; border-radius: 2px; }
.ptitle { flex: 1; overflow: hidden; white-space: nowrap; }
.pi { width: 12px; height: 12px; margin-right: 5px; }
.pi + .pi { margin-right: 2px; margin-left: 4px; }

.nav { width: 177px; flex: none; display: flex; flex-direction: column; }
.clipl { margin-left: -18px; }
.navbtn { height: 22px; line-height: 21px; text-align: center; background: #f0f0f0; border: 1px solid #a8a8a8; border-left: 0; }
.navtools { height: 27px; background: #fff; border-right: 1px solid #a0a0a0; border-bottom: 2px solid #b4b4b4; display: flex; align-items: center; gap: 8px; }
.tplus, .tminus { display: block; height: 14px; background: #d4e4f6; }
.tplus { width: 2px; }
.tminus { width: 15px; position: relative; background: linear-gradient(#d4e4f6 40%, #3b7fc4 40%, #3b7fc4 60%, #d4e4f6 60%); }
.tree { flex: 1; background: #fff; border-right: 2px solid #a0a0a0; padding-top: 3px; }
.tn, .tc { position: relative; display: flex; align-items: center; gap: 5px; height: 16px; }
.tn { padding-left: 5px; }
.tc { padding-left: 24px; }
.tn::before { content: ""; position: absolute; left: 1px; top: 8px; width: 4px; border-top: 1px dotted #666; }
.tc::before { content: ""; position: absolute; left: 14px; top: 8px; width: 10px; border-top: 1px dotted #666; }
.tc::after { content: ""; position: absolute; left: 13px; top: 0; height: 16px; border-left: 1px dotted #666; }
.tc.last::after { height: 9px; }
.selbox { display: flex; align-items: center; gap: 5px; background: #d4d4d4; margin-left: -2px; padding-left: 2px; padding-right: 1px; }

.mid { width: 228px; flex: none; margin-left: 6px; display: flex; flex-direction: column; min-height: 0; }
.listpanel { flex: none; height: 494px; display: flex; flex-direction: column; }
.listtools { display: flex; flex: none; align-items: center; height: 26px; background: #fff; padding-left: 5px; margin-top: 1px; }
.search { display: flex; flex: none; align-items: center; height: 26px; background: #f0f0f0; }
.sbox { width: 202px; height: 23px; margin-left: 1px; background: #fff; border: 1px solid #555; border-bottom-width: 2px; color: #777; padding-left: 2px; line-height: 20px; }
.gridwrap { flex: 1; background: #fff; border: 1px solid #a8a8a8; border-width: 1px 2px 1px 1px; padding: 2px 1px 0 1px; }
table { border-collapse: collapse; table-layout: fixed; }
.lg { width: 223px; }
.c0 { width: 27px; }
.lg th, .lg td { height: 19px; padding: 0; border: 1px solid #c8c8c8; font-weight: 400; }
.lg th { height: 21px; }
.hn { background: #f2f2f2; }
.oh { background: linear-gradient(#fbd99a, #f0b962); color: #800080; font-weight: 400; }
.n { text-align: center; background: #f7f7f7; font-family: "Liberation Mono", monospace; }
.cur .n { background: #fdd08c; }
.cur .pr { background: #d5e6f6; }
.pr { padding-left: 2px !important; }
.bx { display: inline-block; width: 12px; height: 12px; line-height: 9px; text-align: center; border: 1px solid #999; margin-right: 5px; vertical-align: -2px; background: #fff; font-family: "Liberation Sans", sans-serif; }
.ch { position: relative; padding-left: 31px !important; }
.ch::before { content: ""; position: absolute; left: 8px; top: -2px; width: 18px; height: 11px; border-left: 1px solid #aaa; border-bottom: 1px solid #aaa; }

.proppanel { flex: 1; min-height: 0; overflow: hidden; margin-top: 4px; display: flex; flex-direction: column; }
.proppanel .phead { height: 15px; }
.propwrap { flex: 1; min-height: 0; overflow: hidden; background: #fff; border: 1px solid #a8a8a8; border-width: 1px 2px 0 1px; margin-top: 2px; padding-left: 2px; padding-top: 1px; }
.pg { width: 178px; }
.p0 { width: 83px; } .p1 { width: 64px; } .p2 { width: 31px; }
.pg th, .pg td { height: 21px; padding: 0; border: 1px solid #c8c8c8; font-weight: 400; overflow: hidden; white-space: nowrap; }
.pg .ph th { height: 22px; }
.pg .sh td { height: 19px; }
.pg td:first-child { padding-left: 20px; }
.ph th { text-align: left; padding-left: 2px; }
.pg .nh { padding-left: 2px; }
.pg .oh { padding-left: 2px; }
.pg td.val { background: #d5e6f6; padding-left: 2px; }
.pg td.tv { padding-left: 2px; }
.blue { color: #0000e0; }
.grey { color: #888; }
.cbx { display: block; width: 13px; height: 13px; margin-left: 2px; border: 1px solid #333; background: #fff; }
.pg td.grp { padding-left: 2px; }
.pg td.sub { padding-left: 30px; position: relative; overflow: visible; }
.pg td.sub::before { content: ""; position: absolute; left: 8px; top: -4px; width: 20px; height: 14px; border-left: 1px solid #aaa; border-bottom: 1px solid #aaa; }

.work { flex: 1; margin-left: 4px; margin-top: -1px; min-width: 0; display: flex; flex-direction: column; }
.rowtop { display: flex; flex: none; align-items: center; height: 29px; background: #fafafa; }
.row3 { height: 28px; border-bottom: 1px solid #dcdcdc; }
.row3.p1 { width: 491px; }
.row3.p2 { margin-left: 76px; flex: 1; overflow: hidden; }
.row4 { height: 29px; width: 478px; border-bottom: 1px solid #dcdcdc; }
.stage { display: flex; flex: 1; min-height: 0; }
.vtools { width: 26px; flex: none; display: flex; flex-direction: column; align-items: center; background: #f0f0f0; overflow: hidden; padding-right: 1px; }
.vgrip { display: block; flex: none; width: 24px; height: 2px; margin-top: 2px; background-image: linear-gradient(90deg, #999 50%, transparent 50%); background-size: 3px 2px; }
.vsep { display: block; flex: none; width: 20px; height: 1px; background: #8c8c8c; }
.vi { display: flex; flex: none; flex-direction: column; align-items: center; gap: 1px; }
.vt { writing-mode: vertical-rl; text-orientation: upright; font-size: 14px; line-height: 16px; letter-spacing: 1px; }
.varr { display: block; flex: none; width: 4px; height: 6px; margin: 0; border-top: 3px solid transparent; border-bottom: 3px solid transparent; border-right: 4px solid #111; }

.canvas { flex: none; }
.block { fill: #e6e6fa; }
.gbeam { fill: #55ff55; }
.olive { fill: none; stroke: #808000; stroke-width: 4; }
.red { fill: none; stroke: #ff0000; stroke-width: 1; }
.axis { fill: none; stroke: #008000; stroke-width: 1; }
.blab text { font-family: "Liberation Sans", sans-serif; font-size: 14px; fill: #d0d0d0; text-anchor: middle; }
.dimt text { font-family: "Liberation Sans", sans-serif; font-size: 14px; fill: #c8c8c8; letter-spacing: 1px; }
.jl text { font-family: "Liberation Sans", sans-serif; font-size: 11px; fill: #b0b0b0; letter-spacing: .7px; mix-blend-mode: difference; }
.jl text.d { font-size: 12px; letter-spacing: .75px; }

.anno { position: absolute; left: 0; top: 0; pointer-events: none; }
.anno polygon { fill: #f03e3e; }
```
